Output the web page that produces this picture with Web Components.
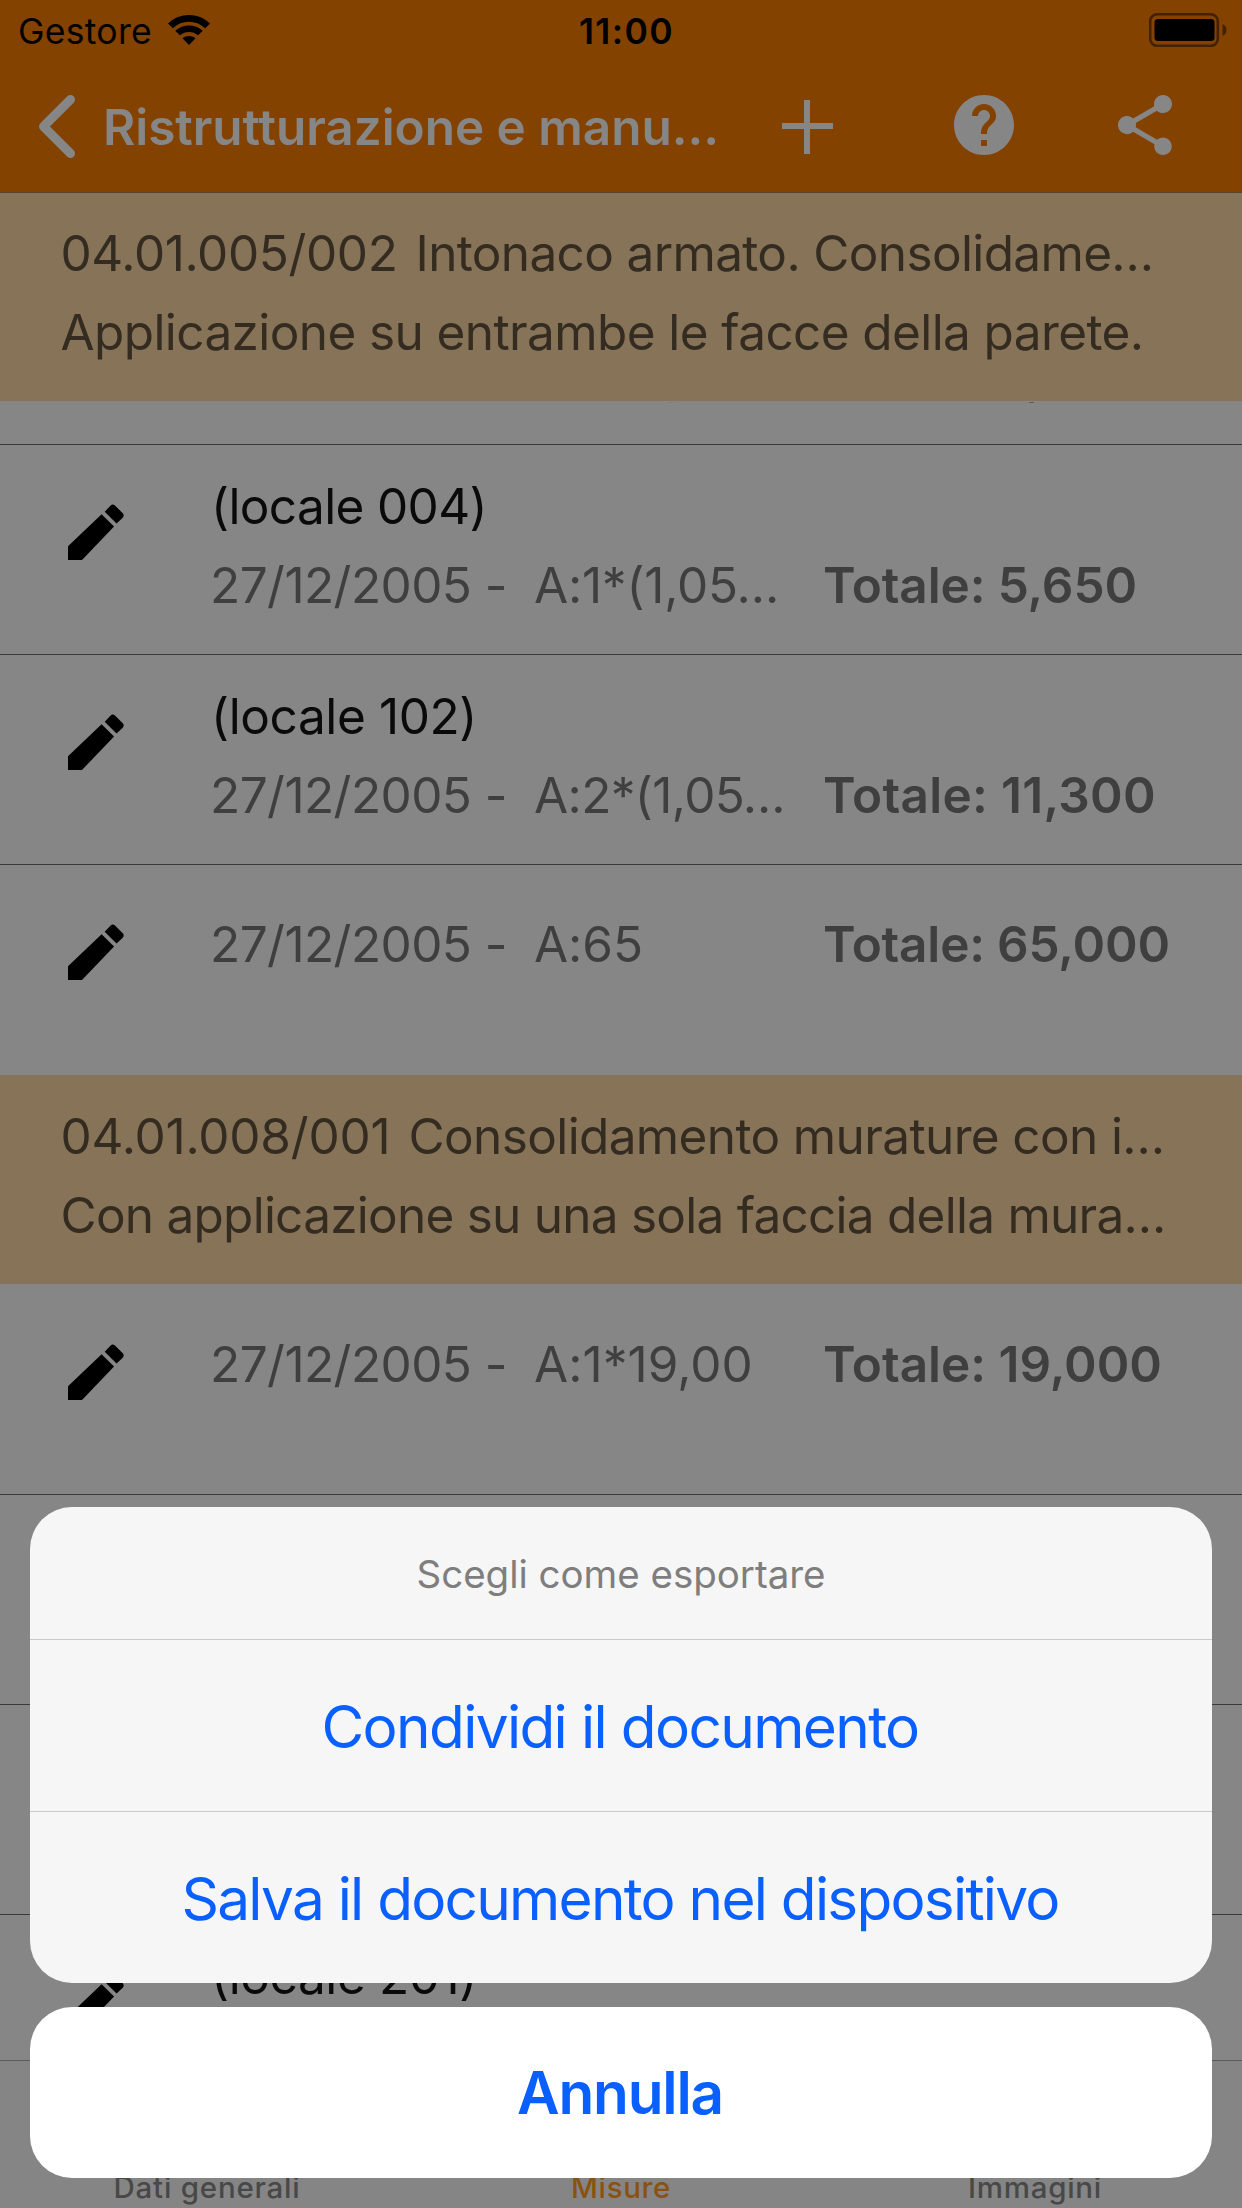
<!DOCTYPE html>
<html lang="it">
<head>
<meta charset="utf-8">
<title>Misure</title>
<style>
  html, body {
    margin: 0;
    padding: 0;
  }
  body {
    width: 1242px;
    height: 2208px;
    overflow: hidden;
    background: #868686;
    font-family: Inter, "Liberation Sans", sans-serif;
    font-size: 49.5px;
  }
</style>
</head>
<body>
<measure-app>
  <status-bar slot="top" carrier="Gestore" time="11:00"></status-bar>
  <nav-bar slot="top"><text-line width="616" weight="600">Ristrutturazione e manu…</text-line></nav-bar>

  <section-header slot="list" style="--h: 208px">
    <span slot="first"><text-line width="337">04.01.005/002</text-line><text-line style="margin-left: 18px" width="738">Intonaco armato. Consolidame…</text-line></span>
    <text-line slot="second" width="1083">Applicazione su entrambe le facce della parete.</text-line>
  </section-header>
  <row-peek slot="list"></row-peek>
  <measure-row slot="list" line edit>
    <text-line slot="title" width="276">(locale 004)</text-line>
    <text-line slot="date" width="297">27/12/2005 -</text-line>
    <text-line slot="formula" width="245">A:1*(1,05…</text-line>
    <text-line slot="total" width="314" weight="600">Totale: 5,650</text-line>
  </measure-row>
  <measure-row slot="list" line edit>
    <text-line slot="title" width="266">(locale 102)</text-line>
    <text-line slot="date" width="297">27/12/2005 -</text-line>
    <text-line slot="formula" width="251">A:2*(1,05…</text-line>
    <text-line slot="total" width="333" weight="600">Totale: 11,300</text-line>
  </measure-row>
  <measure-row slot="list" line edit single style="--h: 211px">
    <text-line slot="date" width="297">27/12/2005 -</text-line>
    <text-line slot="formula" width="109">A:65</text-line>
    <text-line slot="total" width="347" weight="600">Totale: 65,000</text-line>
  </measure-row>
  <section-header slot="list" style="--h: 209px; --top: 22px">
    <span slot="first"><text-line width="330">04.01.008/001</text-line><text-line style="margin-left: 18px" width="756">Consolidamento murature con i…</text-line></span>
    <text-line slot="second" width="1105">Con applicazione su una sola faccia della mura…</text-line>
  </section-header>
  <measure-row slot="list" edit single>
    <text-line slot="date" width="297">27/12/2005 -</text-line>
    <text-line slot="formula" width="226">A:1*19,00</text-line>
    <text-line slot="total" width="339" weight="600">Totale: 19,000</text-line>
  </measure-row>
  <measure-row slot="list" line></measure-row>
  <measure-row slot="list" line></measure-row>
  <measure-row slot="list" line edit>
    <text-line slot="title" width="266">(locale 201)</text-line>
  </measure-row>

  <tab-bar slot="tabs">
    <text-line width="187" weight="500">Dati generali</text-line>
    <text-line width="100" weight="500" style="color: #8a5210">Misure</text-line>
    <text-line width="134" weight="500">Immagini</text-line>
  </tab-bar>

  <action-sheet slot="sheet">
    <text-line slot="title" width="409">Scegli come esportare</text-line>
    <action-item><text-line width="597">Condividi il documento</text-line></action-item>
    <action-item><text-line width="877">Salva il documento nel dispositivo</text-line></action-item>
    <text-line slot="cancel" width="206" weight="600">Annulla</text-line>
  </action-sheet>
</measure-app>

<script>
  // Small helper: attach an open shadow root with the given markup
  function render(el, html) {
    const template = document.createElement('template');
    template.innerHTML = html;
    const root = el.attachShadow({ mode: 'open' });
    root.appendChild(template.content.cloneNode(true));
    return root;
  }

  // One line of text, tracked so that it advances exactly "width" pixels
  class TextLine extends HTMLElement {
    connectedCallback() {
      if (this.shadowRoot) return;
      const root = render(this, `
        <style>
          :host { display: block; white-space: nowrap; }
          span { display: inline-block; }
        </style>
        <span><slot></slot></span>
      `);
      this.style.fontWeight = this.getAttribute('weight') || 400;
      const width = Number(this.getAttribute('width'));
      this.style.width = width + 'px';
      this.fit(root.querySelector('span'), width);
    }

    fit(span, width) {
      requestAnimationFrame(() => {
        const natural = span.getBoundingClientRect().width;
        const count = [...this.textContent].length;
        span.style.letterSpacing = ((width - natural) / count).toFixed(3) + 'px';
      });
    }
  }

  class MeasureApp extends HTMLElement {
    constructor() {
      super();
      render(this, `
        <style>
          :host {
            display: flex;
            flex-direction: column;
            position: relative;
            width: 1242px;
            height: 2208px;
            overflow: hidden;
          }
          main {
            flex: 1;
            min-height: 0;
            overflow: hidden;
          }
        </style>
        <slot name="top"></slot>
        <main><slot name="list"></slot></main>
        <slot name="tabs"></slot>
        <slot name="sheet"></slot>
      `);
    }
  }

  class StatusBar extends HTMLElement {
    connectedCallback() {
      if (this.shadowRoot) return;
      render(this, `
        <style>
          :host {
            display: grid;
            grid-template-columns: 1fr auto 1fr;
            height: 60px;
            line-height: 64px;
            background: #844200;
            color: #000;
            font-size: 35.5px;
          }
          .left { display: flex; padding-left: 18px; }
          .time { padding-left: 11px; }
          .wifi { margin: 15px 0 0 16px; width: 42px; height: 30px; }
          .right { display: flex; justify-content: flex-end; padding: 13px 15px 0 0; }
          svg { display: block; }
        </style>
        <div class="left">
          <text-line width="134">${this.getAttribute('carrier')}</text-line>
          <svg class="wifi" viewBox="0 0 42 30">
            <path d="M0 8.5C12-2.8 30-2.8 42 8.5L37.2 13.3C28 4.7 14 4.7 4.8 13.3Z"/>
            <path d="M7.2 15.8C15 8.7 27 8.7 34.8 15.8L30 20.3C25 15.8 17 15.8 12 20.3Z"/>
            <path d="M14.5 23.2C18.3 20.2 23.7 20.2 27.5 23.2L21 30Z"/>
          </svg>
        </div>
        <div class="time"><text-line width="95" weight="600">${this.getAttribute('time')}</text-line></div>
        <div class="right">
          <svg width="78" height="34" viewBox="0 0 78 34">
            <rect x="1.2" y="1.2" width="67.6" height="31.6" rx="7" fill="none" stroke="#442200" stroke-width="2.5"/>
            <rect x="5.5" y="6" width="60" height="22" rx="3.5"/>
            <path d="M73.5 11C76.5 12.5 77.5 14.5 77.5 17S76.5 21.5 73.5 23Z" fill="#442200"/>
          </svg>
        </div>
      `);
    }
  }

  class NavBar extends HTMLElement {
    constructor() {
      super();
      render(this, `
        <style>
          :host {
            display: flex;
            box-sizing: border-box;
            height: 133px;
            background: #844200;
            border-bottom: 1px solid #544434;
            color: #868686;
            line-height: 134px;
          }
          svg { display: block; fill: currentColor; }
          .back { margin: 34px 27px 0 38px; }
          .plus { margin: 40px 0 0 63px; }
          .help { margin: 35px 0 0 121px; filter: blur(0.7px); }
          .share { margin: 35px 0 0 104px; filter: blur(0.7px); }
        </style>
        <svg class="back" width="38" height="65" viewBox="0 0 38 65">
          <path d="M32.5 5.5L5.5 32.5L32.5 59.5" fill="none" stroke="currentColor" stroke-width="9" stroke-linecap="round" stroke-linejoin="round"/>
        </svg>
        <slot></slot>
        <svg class="plus" width="51" height="54" viewBox="0 0 51 54">
          <path d="M22 0h6v23h23v6H28v25h-6V29H0v-6h22z"/>
        </svg>
        <svg class="help" width="60" height="60" viewBox="2 2 20 20">
          <path d="M12 2C6.48 2 2 6.48 2 12s4.48 10 10 10 10-4.48 10-10S17.52 2 12 2zm1 17h-2v-2h2v2zm2.07-7.75l-.9.92C13.45 12.9 13 13.5 13 15h-2v-.5c0-1.1.45-2.1 1.17-2.83l1.24-1.26c.37-.36.59-.86.59-1.41 0-1.1-.9-2-2-2s-2 .9-2 2H8c0-2.21 1.79-4 4-4s4 1.79 4 4c0 .88-.36 1.68-.93 2.25z"/>
        </svg>
        <svg class="share" width="54" height="60" viewBox="3 2 18 19.92" preserveAspectRatio="none">
          <path d="M18 16.08c-.76 0-1.44.3-1.96.77L8.91 12.7c.05-.23.09-.46.09-.7s-.04-.47-.09-.7l7.05-4.11c.54.5 1.25.81 2.04.81 1.66 0 3-1.34 3-3s-1.34-3-3-3-3 1.34-3 3c0 .24.04.47.09.7L8.04 9.81C7.5 9.31 6.79 9 6 9c-1.66 0-3 1.34-3 3s1.34 3 3 3c.79 0 1.5-.31 2.04-.81l7.12 4.16c-.05.21-.08.43-.08.65 0 1.61 1.31 2.92 2.92 2.92s2.92-1.31 2.92-2.92-1.31-2.92-2.92-2.92z"/>
        </svg>
      `);
    }
  }

  class SectionHeader extends HTMLElement {
    constructor() {
      super();
      render(this, `
        <style>
          :host {
            display: flex;
            flex-direction: column;
            box-sizing: border-box;
            height: var(--h);
            padding: var(--top, 21px) 0 0 60.5px;
            background: #877458;
            color: #352c21;
            line-height: 79px;
            white-space: nowrap;
          }
          .line { display: flex; height: 79px; }
          ::slotted(span) { display: flex; }
        </style>
        <div class="line"><slot name="first"></slot></div>
        <div class="line"><slot name="second"></slot></div>
      `);
    }
  }

  // Bottom of the row scrolled under the sticky header: only two comma tails show
  class RowPeek extends HTMLElement {
    constructor() {
      super();
      render(this, `
        <style>
          :host { display: flex; height: 43px; }
          i { width: 4px; height: 1px; margin: 1px 0 0 669px; background: #7c7c7c; }
          i + i { width: 5px; margin-left: 356px; background: #5c5c5c; }
        </style>
        <i></i><i></i>
      `);
    }
  }

  class MeasureRow extends HTMLElement {
    constructor() {
      super();
      render(this, `
        <style>
          :host {
            display: flex;
            box-sizing: border-box;
            height: var(--h, 210px);
            line-height: 79px;
            border-top: 1px solid transparent;
            color: #3f3f3f;
          }
          :host([line]) { border-top-color: #3a3a3a; }
          .icon { width: 142px; padding: 59px 0 0 68px; }
          .icon svg { display: none; }
          :host([edit]) .icon svg { display: block; filter: blur(0.7px); }
          .body { padding-top: 22px; }
          :host([single]) .body { padding-top: 40px; }
          .title { height: 79px; padding-left: 1px; color: #0a0a0a; }
          :host([single]) .title { display: none; }
          .detail { display: grid; grid-template-columns: 324px 289px auto; }
        </style>
        <div class="icon">
          <svg width="56" height="56" viewBox="3 3 18 18">
            <path d="M3 16.6V21h4.5L17.8 10.2 13.8 6.3zM14.8 5.5L16.7 3.5Q17.4 2.8 18.1 3.5L20.6 6Q21.2 6.7 20.6 7.4L18.6 9.3z"/>
          </svg>
        </div>
        <div class="body">
          <div class="title"><slot name="title"></slot></div>
          <div class="detail">
            <slot name="date"></slot>
            <slot name="formula"></slot>
            <slot name="total"></slot>
          </div>
        </div>
      `);
    }
  }

  class TabBar extends HTMLElement {
    constructor() {
      super();
      render(this, `
        <style>
          :host {
            display: grid;
            grid-template-columns: repeat(3, 1fr);
            justify-items: center;
            align-items: end;
            box-sizing: border-box;
            height: 148px;
            border-top: 1px solid #5a5a5a;
            background: #858585;
            color: #484848;
            font-size: 29.5px;
            line-height: 42px;
          }
        </style>
        <slot></slot>
      `);
    }
  }

  class ActionItem extends HTMLElement {
    constructor() {
      super();
      render(this, `
        <style>
          :host {
            display: flex;
            justify-content: center;
            box-sizing: border-box;
            height: 172px;
            padding-right: 2px;
            border-top: 1px solid #cacacc;
            color: #0a60ff;
            font-size: 58.5px;
            line-height: 173px;
          }
        </style>
        <slot></slot>
      `);
    }
  }

  class ActionSheet extends HTMLElement {
    constructor() {
      super();
      render(this, `
        <style>
          :host {
            position: absolute;
            left: 30px;
            right: 30px;
            bottom: 30px;
            display: flex;
            flex-direction: column;
            gap: 24px;
          }
          .group {
            border-radius: 42px;
            background: #f6f6f6;
            overflow: hidden;
          }
          .title {
            display: flex;
            justify-content: center;
            height: 132px;
            color: #7e7e7e;
            font-size: 38.5px;
            line-height: 134px;
          }
          .cancel {
            display: flex;
            justify-content: center;
            box-sizing: border-box;
            height: 171px;
            padding-right: 2px;
            border-radius: 42px;
            background: #fff;
            color: #0a60ff;
            font-size: 58.5px;
            line-height: 172px;
          }
        </style>
        <div class="group">
          <div class="title"><slot name="title"></slot></div>
          <slot></slot>
        </div>
        <div class="cancel"><slot name="cancel"></slot></div>
      `);
    }
  }

  customElements.define('text-line', TextLine);
  customElements.define('measure-app', MeasureApp);
  customElements.define('status-bar', StatusBar);
  customElements.define('nav-bar', NavBar);
  customElements.define('section-header', SectionHeader);
  customElements.define('row-peek', RowPeek);
  customElements.define('measure-row', MeasureRow);
  customElements.define('tab-bar', TabBar);
  customElements.define('action-item', ActionItem);
  customElements.define('action-sheet', ActionSheet);
</script>
</body>
</html>
